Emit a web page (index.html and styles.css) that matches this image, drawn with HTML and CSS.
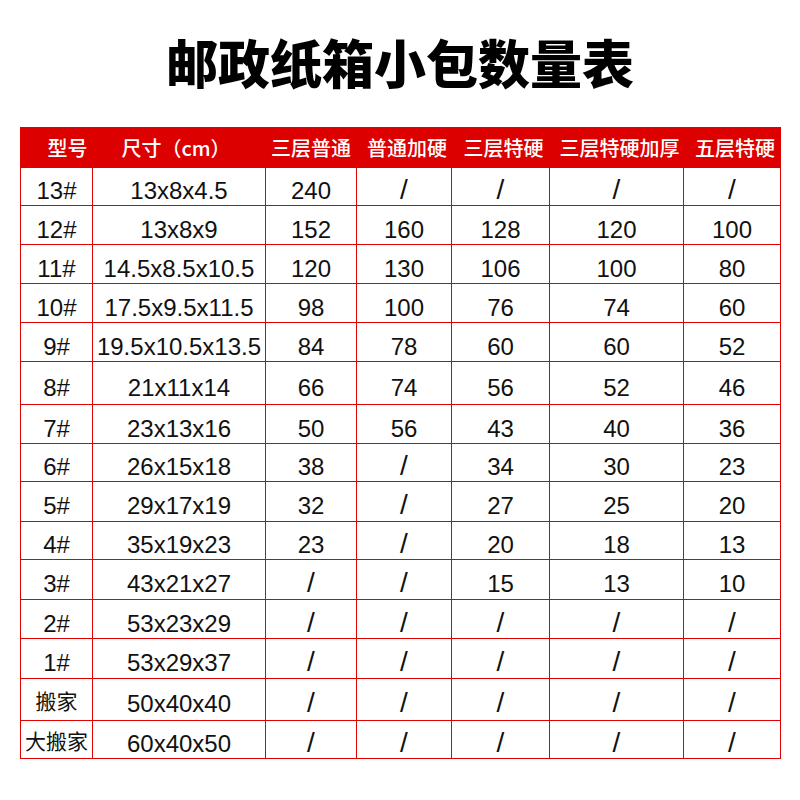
FILE: index.html
```html
<!DOCTYPE html>
<html lang="zh-CN">
<head>
<meta charset="utf-8">
<title>邮政纸箱小包数量表</title>
<link rel="stylesheet" href="styles.css">
</head>
<body>
<div class="page">
  <h1 class="title">邮政纸箱小包数量表</h1>
  <div class="sheet">
    <div class="hd h-model">型号</div>
    <div class="hd h-size">尺寸（cm）</div>
    <div class="hd">三层普通</div>
    <div class="hd h-r">普通加硬</div>
    <div class="hd h-r">三层特硬</div>
    <div class="hd h-r">三层特硬加厚</div>
    <div class="hd h-r">五层特硬</div>

    <div class="c">13#</div><div class="c">13x8x4.5</div><div class="c">240</div><div class="c na">/</div><div class="c na">/</div><div class="c na">/</div><div class="c na">/</div>
    <div class="c">12#</div><div class="c">13x8x9</div><div class="c">152</div><div class="c">160</div><div class="c">128</div><div class="c">120</div><div class="c">100</div>
    <div class="c">11#</div><div class="c">14.5x8.5x10.5</div><div class="c">120</div><div class="c">130</div><div class="c">106</div><div class="c">100</div><div class="c">80</div>
    <div class="c">10#</div><div class="c">17.5x9.5x11.5</div><div class="c">98</div><div class="c">100</div><div class="c">76</div><div class="c">74</div><div class="c">60</div>
    <div class="c">9#</div><div class="c">19.5x10.5x13.5</div><div class="c">84</div><div class="c">78</div><div class="c">60</div><div class="c">60</div><div class="c">52</div>
    <div class="c">8#</div><div class="c">21x11x14</div><div class="c">66</div><div class="c">74</div><div class="c">56</div><div class="c">52</div><div class="c">46</div>
    <div class="c">7#</div><div class="c">23x13x16</div><div class="c">50</div><div class="c">56</div><div class="c">43</div><div class="c">40</div><div class="c">36</div>
    <div class="c">6#</div><div class="c">26x15x18</div><div class="c">38</div><div class="c na">/</div><div class="c">34</div><div class="c">30</div><div class="c">23</div>
    <div class="c">5#</div><div class="c">29x17x19</div><div class="c">32</div><div class="c na">/</div><div class="c">27</div><div class="c">25</div><div class="c">20</div>
    <div class="c">4#</div><div class="c">35x19x23</div><div class="c">23</div><div class="c na">/</div><div class="c">20</div><div class="c">18</div><div class="c">13</div>
    <div class="c">3#</div><div class="c">43x21x27</div><div class="c na">/</div><div class="c na">/</div><div class="c">15</div><div class="c">13</div><div class="c">10</div>
    <div class="c">2#</div><div class="c">53x23x29</div><div class="c na">/</div><div class="c na">/</div><div class="c na">/</div><div class="c na">/</div><div class="c na">/</div>
    <div class="c">1#</div><div class="c">53x29x37</div><div class="c na">/</div><div class="c na">/</div><div class="c na">/</div><div class="c na">/</div><div class="c na">/</div>
    <div class="c cjk">搬家</div><div class="c">50x40x40</div><div class="c na">/</div><div class="c na">/</div><div class="c na">/</div><div class="c na">/</div><div class="c na">/</div>
    <div class="c cjk">大搬家</div><div class="c">60x40x50</div><div class="c na">/</div><div class="c na">/</div><div class="c na">/</div><div class="c na">/</div><div class="c na">/</div>
  </div>
</div>
</body>
</html>
```

FILE: styles.css
```css
html, body {
  margin: 0;
  padding: 0;
  background: #ffffff;
}

.page {
  width: 800px;
  height: 800px;
  display: flex;
  flex-direction: column;
}

.title {
  margin: 36px 0 0;
  height: 52px;
  font-family: "Noto Sans CJK SC", sans-serif;
  font-weight: 900;
  font-size: 52px;
  line-height: 52px;
  color: #000;
  text-align: center;
}

.sheet {
  margin: 39px 0 0 20px;
  width: 761px;
  box-sizing: border-box;
  padding: 1px;
  display: grid;
  grid-template-columns: 71px 172px 90px 94px 97px 133px 96px;
  grid-template-rows: 39px 37px 38px 38px 38px 38px 42px 38px 37px 39px 37px 39px 38px 39px 41px 37px;
  gap: 1px;
  background: #e00000;
}

.hd {
  background: #dc0000;
  color: #ffffff;
  font-family: "Noto Sans CJK SC", sans-serif;
  font-weight: 500;
  font-size: 20px;
  line-height: 1;
  display: flex;
  align-items: center;
  justify-content: center;
  white-space: nowrap;
}

.h-model {
  padding-left: 22px;
}

.h-size {
  padding-right: 6px;
}

.h-r {
  padding-left: 6px;
}

.c {
  background: #ffffff;
  color: #111111;
  font-family: "Liberation Sans", Arial, "Noto Sans CJK SC", sans-serif;
  font-size: 24px;
  line-height: 1;
  display: flex;
  align-items: center;
  justify-content: center;
  padding-top: 9px;
  box-sizing: border-box;
  white-space: nowrap;
}

.na {
  font-size: 28px;
  padding-top: 7px;
}

.cjk {
  font-family: "Noto Sans CJK SC", sans-serif;
  font-size: 21px;
  padding-top: 2px;
}
```
